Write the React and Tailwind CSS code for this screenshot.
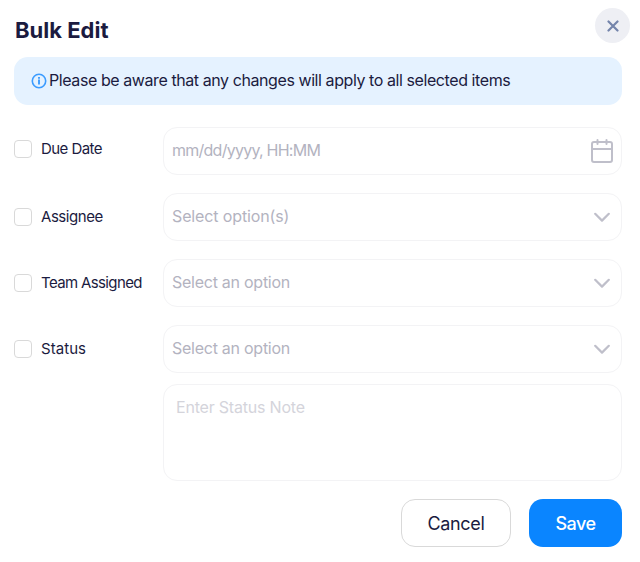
import React, { useState } from 'react';

const CalendarIcon = () => (
  <svg width="24" height="26" viewBox="0 0 24 26" fill="none" stroke="#bfbfca" strokeWidth="2" strokeLinecap="round">
    <rect x="2" y="4" width="20" height="20" rx="2" />
    <path d="M2 11H22M7.5 2V6M16.5 2V6" />
  </svg>
);

const ChevronIcon = () => (
  <svg width="16" height="10" viewBox="0 0 16 10" fill="none" stroke="#bfbfca" strokeWidth="2.2" strokeLinecap="round" strokeLinejoin="round">
    <path d="M1.2 1.8L8 8.6L14.8 1.8" />
  </svg>
);

const InfoIcon = () => (
  <svg width="16" height="16" viewBox="0 0 16 16" fill="none" stroke="#3b9cff" strokeWidth="1.6">
    <circle cx="8" cy="8" r="6.7" />
    <path d="M8 6.6V11.6M8 4V5.7" strokeWidth="1.9" />
  </svg>
);

const fields = [
  {
    id: 'dueDate',
    label: 'Due Date',
    placeholder: 'mm/dd/yyyy, HH:MM',
    labelClass: 'pb-1 tracking-[-0.55px]',
    textClass: '-mt-0.5 tracking-[-0.75px]',
    isDate: true,
  },
  {
    id: 'assignee',
    label: 'Assignee',
    placeholder: 'Select option(s)',
    labelClass: 'tracking-[-0.45px]',
    textClass: '-mt-0.5 tracking-[-0.13px]',
  },
  {
    id: 'team',
    label: 'Team Assigned',
    placeholder: 'Select an option',
    labelClass: 'tracking-[-0.63px]',
    textClass: '-mt-0.5 tracking-[-0.26px]',
  },
  {
    id: 'status',
    label: 'Status',
    placeholder: 'Select an option',
    labelClass: 'tracking-[0.05px]',
    textClass: '-mt-0.5 tracking-[-0.26px]',
  },
];

const App = () => {
  const [checked, setChecked] = useState({});

  const toggle = (id) => setChecked((prev) => ({ ...prev, [id]: !prev[id] }));

  return (
    <div className="h-[562px] w-[640px] bg-white pl-3.5 pr-[18px] pt-2 font-['Inter',sans-serif] text-[#1b1b40]">
      <div className="-mr-2 flex h-[49px] items-start justify-between">
        <h1 className="ml-px mt-1.5 text-[22px] font-bold leading-8 tracking-[0]">Bulk Edit</h1>
        <button
          aria-label="Close"
          className="flex size-[35px] items-center justify-center rounded-full bg-[#eeeff4]"
        >
          <svg width="12" height="12" viewBox="0 0 12 12" fill="none" stroke="#7484ab" strokeWidth="2.2" strokeLinecap="round">
            <path d="M1.5 1.5L10.5 10.5M10.5 1.5L1.5 10.5" />
          </svg>
        </button>
      </div>

      <div className="flex h-12 items-center gap-0.5 rounded-[14px] bg-[#e5f2ff] pl-[17px]">
        <InfoIcon />
        <p className="whitespace-nowrap pb-0.5 text-base leading-6 tracking-[-0.42px]">
          Please be aware that any changes will apply to all selected items
        </p>
      </div>

      <div className="mt-[22px] space-y-[18px]">
        {fields.map((field) => (
          <div key={field.id} className="flex h-12">
            <label className="flex w-[149px] items-center">
              <input
                type="checkbox"
                checked={!!checked[field.id]}
                onChange={() => toggle(field.id)}
                className="sr-only"
              />
              <span className={`flex items-center gap-[9px] whitespace-nowrap text-[15px] ${field.labelClass}`}>
                <span
                  className={`size-[18px] rounded border border-[#d9d9d9] ${
                    checked[field.id] ? 'bg-[#0a85ff]' : 'bg-white'
                  }`}
                />
                {field.label}
              </span>
            </label>
            <div className="flex flex-1 items-center justify-between rounded-[14px] border border-[#f3f3f5] pl-2 text-base text-[#b3b3bf]">
              <span className={field.textClass}>{field.placeholder}</span>
              <span className={field.isDate ? 'mr-[7px]' : 'mr-[11px]'}>
                {field.isDate ? <CalendarIcon /> : <ChevronIcon />}
              </span>
            </div>
          </div>
        ))}
      </div>

      <textarea
        placeholder="Enter Status Note"
        className="ml-[149px] mt-[11px] block h-[97px] w-[459px] resize-none rounded-[14px] border border-[#f3f3f5] px-3 py-2.5 text-base leading-6 tracking-[-0.2px] outline-none placeholder:text-[#d4d4db]"
      />

      <div className="mt-[18px] flex justify-end gap-[18px] text-lg">
        <button className="h-12 w-[110px] rounded-[14px] border border-[#d9d9d9] pt-0.5 tracking-[-0.3px]">
          Cancel
        </button>
        <button className="h-12 w-[93px] rounded-[14px] bg-[#0a85ff] pt-0.5 font-medium tracking-[-0.5px] text-white">
          Save
        </button>
      </div>
    </div>
  );
};

export default App;
